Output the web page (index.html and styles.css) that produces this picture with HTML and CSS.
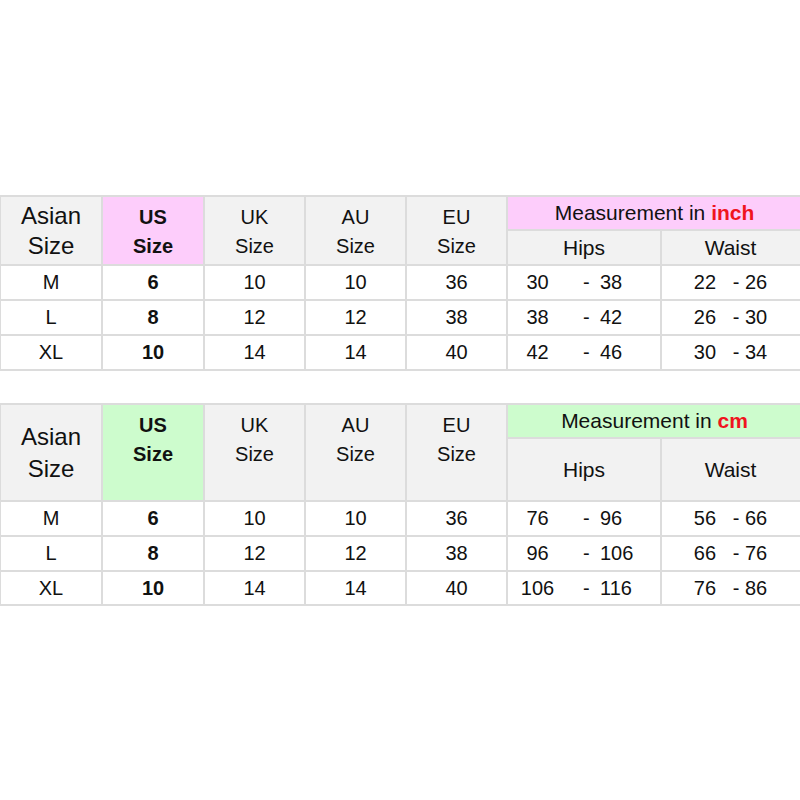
FILE: index.html
```html
<!DOCTYPE html>
<html>
<head>
<meta charset="utf-8">
<link rel="stylesheet" href="styles.css">
</head>
<body>
<div class="page">
  <table class="chart chart-inch">
    <colgroup>
      <col class="c1"><col class="c2"><col class="c3"><col class="c4"><col class="c5"><col class="c6"><col class="c7">
    </colgroup>
    <tr class="h1">
      <th rowspan="2" class="asian">Asian<br>Size</th>
      <th rowspan="2" class="us pink">US<br>Size</th>
      <th rowspan="2" class="sz">UK<br>Size</th>
      <th rowspan="2" class="sz">AU<br>Size</th>
      <th rowspan="2" class="sz">EU<br>Size</th>
      <th colspan="2" class="meas pink">Measurement in <b class="unit">inch</b></th>
    </tr>
    <tr class="h2">
      <th class="sub">Hips</th>
      <th class="sub waist">Waist</th>
    </tr>
    <tr class="r">
      <td>M</td><td class="bold">6</td><td>10</td><td>10</td><td>36</td>
      <td class="hips"><div class="range"><span class="lo">30</span><span class="dash">-</span><span>38</span></div></td>
      <td class="waist">22   - 26</td>
    </tr>
    <tr class="r">
      <td>L</td><td class="bold">8</td><td>12</td><td>12</td><td>38</td>
      <td class="hips"><div class="range"><span class="lo">38</span><span class="dash">-</span><span>42</span></div></td>
      <td class="waist">26   - 30</td>
    </tr>
    <tr class="r">
      <td>XL</td><td class="bold">10</td><td>14</td><td>14</td><td>40</td>
      <td class="hips"><div class="range"><span class="lo">42</span><span class="dash">-</span><span>46</span></div></td>
      <td class="waist">30   - 34</td>
    </tr>
  </table>

  <table class="chart chart-cm">
    <colgroup>
      <col class="c1"><col class="c2"><col class="c3"><col class="c4"><col class="c5"><col class="c6"><col class="c7">
    </colgroup>
    <tr class="h1">
      <th rowspan="2" class="asian mid">Asian<br>Size</th>
      <th rowspan="2" class="us green">US<br>Size</th>
      <th rowspan="2" class="sz">UK<br>Size</th>
      <th rowspan="2" class="sz">AU<br>Size</th>
      <th rowspan="2" class="sz">EU<br>Size</th>
      <th colspan="2" class="meas green">Measurement in <b class="unit">cm</b></th>
    </tr>
    <tr class="h2">
      <th class="sub">Hips</th>
      <th class="sub waist">Waist</th>
    </tr>
    <tr class="r">
      <td>M</td><td class="bold">6</td><td>10</td><td>10</td><td>36</td>
      <td class="hips"><div class="range"><span class="lo">76</span><span class="dash">-</span><span>96</span></div></td>
      <td class="waist">56   - 66</td>
    </tr>
    <tr class="r">
      <td>L</td><td class="bold">8</td><td>12</td><td>12</td><td>38</td>
      <td class="hips"><div class="range"><span class="lo">96</span><span class="dash">-</span><span>106</span></div></td>
      <td class="waist">66   - 76</td>
    </tr>
    <tr class="r last">
      <td>XL</td><td class="bold">10</td><td>14</td><td>14</td><td>40</td>
      <td class="hips"><div class="range"><span class="lo">106</span><span class="dash">-</span><span>116</span></div></td>
      <td class="waist">76   - 86</td>
    </tr>
  </table>
</div>
</body>
</html>
```

FILE: styles.css
```css
html, body {
  margin: 0;
  padding: 0;
  background: #ffffff;
  overflow: hidden;
}

body {
  font-family: "Liberation Sans", Arial, sans-serif;
  color: #111111;
}

.page {
  padding-top: 195px;
  width: 820px;
}

.chart {
  border-collapse: collapse;
  table-layout: fixed;
  width: 808px;
  margin-left: -1px;
}

.chart-cm {
  margin-top: 32px;
}

.c1 { width: 102px; }
.c2 { width: 102px; }
.c3 { width: 101px; }
.c4 { width: 101px; }
.c5 { width: 101px; }
.c6 { width: 154px; }
.c7 { width: 147px; }

.chart th,
.chart td {
  border: 2px solid #dcdcdc;
  padding: 0;
  text-align: center;
  font-weight: normal;
}

.chart th {
  background: #f2f2f2;
}

.chart-inch .h1 { height: 34px; }
.chart-inch .h2 { height: 35px; }
.chart-cm .h1 { height: 34px; }
.chart-cm .h2 { height: 63px; }
.chart .r { height: 35px; }
.chart .r.last { height: 34px; }

.asian {
  font-size: 24px;
  line-height: 30px;
  vertical-align: middle;
}

.asian.mid {
  line-height: 32px;
}

.chart .us,
.chart .sz {
  vertical-align: top;
  padding-top: 6px;
  line-height: 29px;
}

.chart .us {
  font-size: 20px;
  font-weight: bold;
}

.sz {
  font-size: 20px;
}

.chart .pink { background: #fdcdfb; }
.chart .green { background: #cdfccd; }

.meas {
  font-size: 21px;
  vertical-align: middle;
  padding-right: 6px !important;
}

.unit {
  color: #f0141e;
  font-weight: bold;
}

.sub {
  font-size: 21px;
  vertical-align: middle;
}

.chart td {
  font-size: 20px;
  vertical-align: middle;
}

.chart td.bold {
  font-weight: bold;
}

.range {
  display: flex;
  padding-left: 4px;
  text-align: left;
}

.lo {
  width: 51px;
  text-align: center;
}

.dash {
  margin-left: 20px;
  width: 17px;
}

.chart .waist {
  white-space: pre;
  padding-right: 8px;
}
```
